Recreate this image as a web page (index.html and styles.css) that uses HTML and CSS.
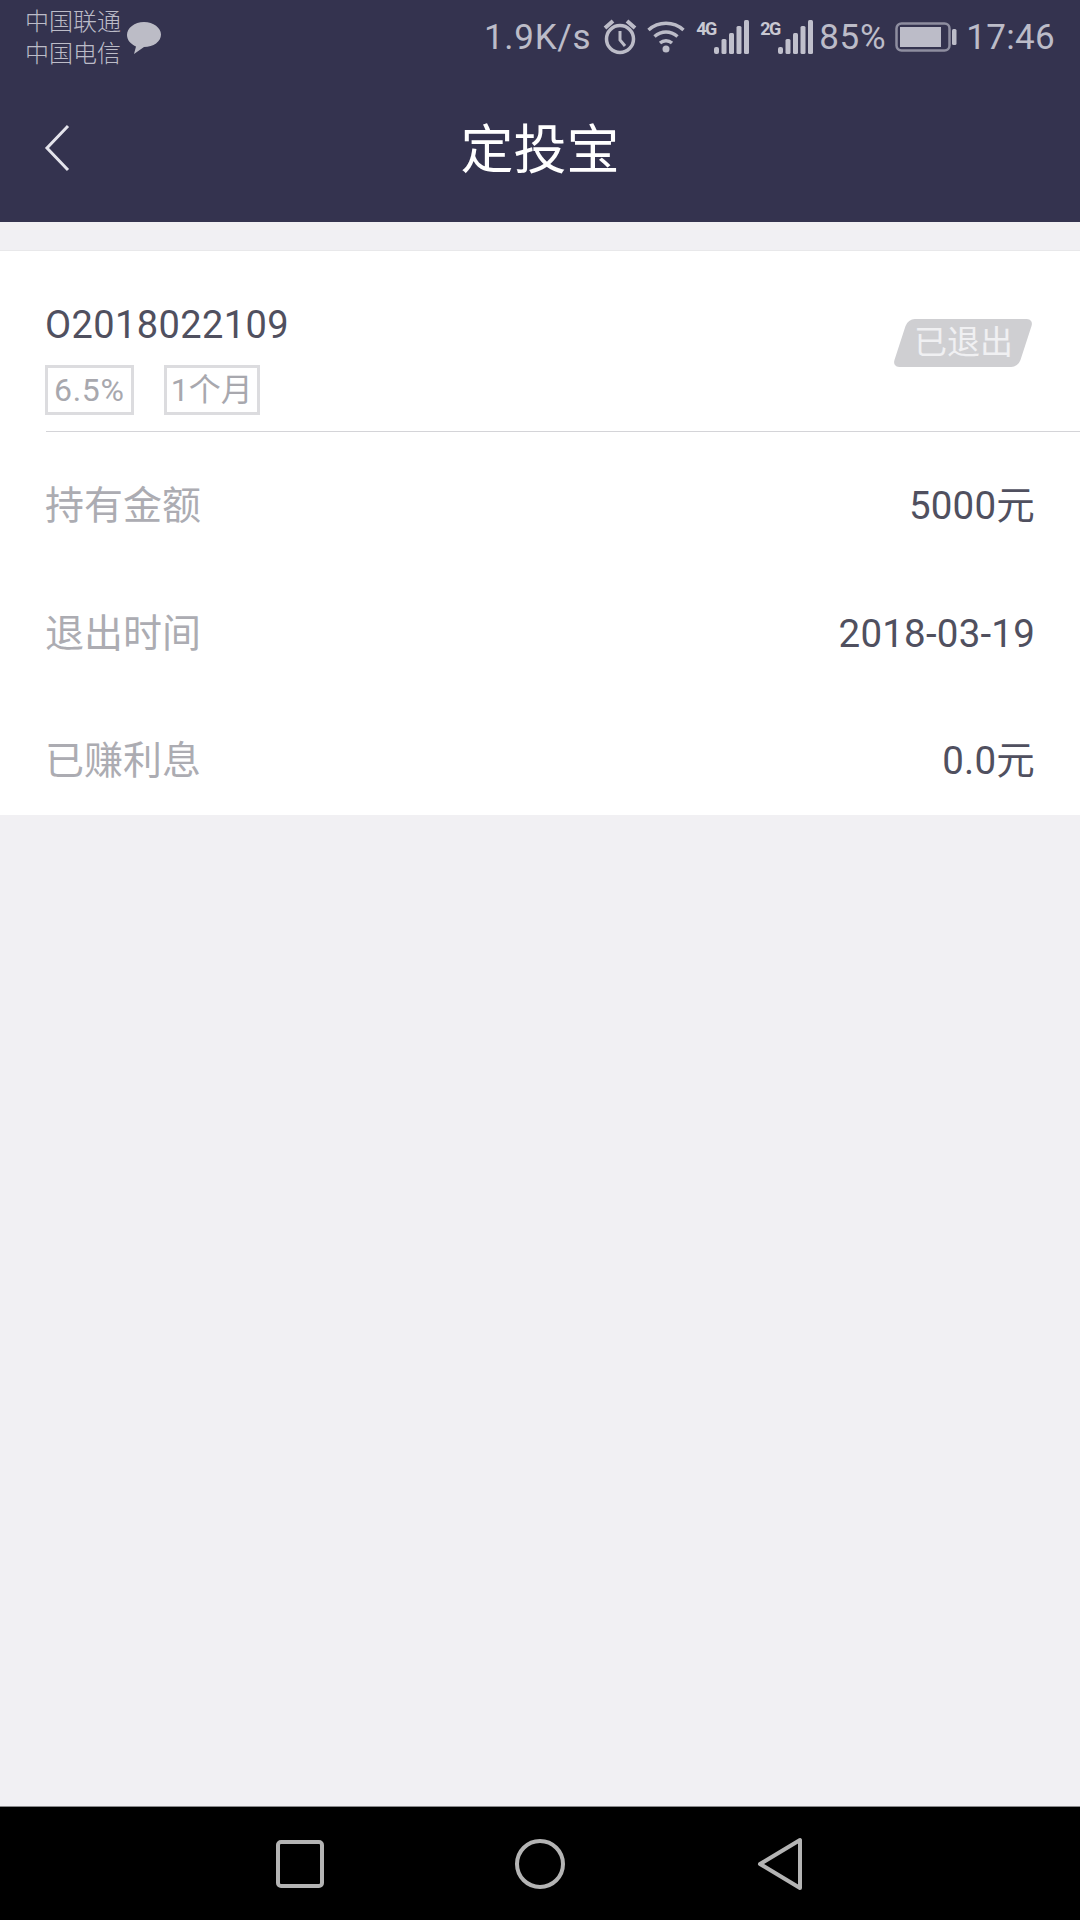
FILE: index.html
```html
<!DOCTYPE html>
<html lang="zh-CN">
<head>
<meta charset="utf-8">
<title>定投宝</title>
<link rel="stylesheet" href="styles.css">
</head>
<body>
<div class="screen">
  <header class="header">
    <div class="status">
      <div class="status-left">
        <div class="carriers"><span>中国联通</span><span>中国电信</span></div>
        <svg class="chat" width="36" height="34" viewBox="0 0 36 34"><path d="M18 1C8.500 1 1 7 1 14c0 5 3.500 9 9 11.500L8 33l10-7c9.500 0 17-5.500 17-12.500C35 7 27.500 1 18 1z" fill="#bcbcc6"/></svg>
      </div>
      <div class="status-right">
        <span class="speed">1.9K/s</span>
        <svg class="ic-alarm" width="36" height="38" viewBox="0 0 36 38" fill="none" stroke="#bcbcc8" stroke-width="3.500"><circle cx="18" cy="21" r="13.500"/><path d="M18 13v9l5 6" stroke-width="3"/><path d="M3 10l8-7M33 10l-8-7" stroke-width="4"/></svg>
        <svg class="ic-wifi" width="38" height="32" viewBox="0 0 38 32" fill="none" stroke="#bcbcc8" stroke-width="3.500"><path d="M1.500 9c10-9 25-9 35 0M7.500 15.500c7-6 16-6 23 0M13 22c3.500-3 8.500-3 12 0"/><circle cx="19" cy="28" r="3.500" fill="#bcbcc8" stroke="none"/></svg>
        <span class="net"><b class="net-label">4G</b><svg width="35" height="34" viewBox="0 0 35 34" fill="#c0c0cc"><rect x="0" y="27" width="5" height="7" rx="2"/><rect x="7.500" y="19" width="5" height="15" rx="1.500"/><rect x="15" y="13" width="5" height="21" rx="1.500"/><rect x="22.500" y="6" width="5" height="28" rx="1.500"/><rect x="30" y="0" width="5" height="34" rx="1.500"/></svg></span>
        <span class="net"><b class="net-label">2G</b><svg width="35" height="34" viewBox="0 0 35 34" fill="#c0c0cc"><rect x="0" y="27" width="5" height="7" rx="2"/><rect x="7.500" y="19" width="5" height="15" rx="1.500"/><rect x="15" y="13" width="5" height="21" rx="1.500"/><rect x="22.500" y="6" width="5" height="28" rx="1.500"/><rect x="30" y="0" width="5" height="34" rx="1.500"/></svg></span>
        <span class="pct">85%</span>
        <svg class="ic-batt" width="62" height="30" viewBox="0 0 62 30"><rect x="1.500" y="1.500" width="53" height="27" rx="5" fill="none" stroke="#8e8ea0" stroke-width="2.500"/><rect x="5" y="5" width="41" height="20" fill="#bcbcc8"/><rect x="57" y="7" width="4.500" height="16" rx="1.500" fill="#bcbcc8"/></svg>
        <span class="time">17:46</span>
      </div>
    </div>
    <div class="navbar">
      <svg class="back" width="26" height="48" viewBox="0 0 26 48" fill="none" stroke="#e4e4ec" stroke-width="3"><path d="M24 2L3 24l21 22"/></svg>
      <h1 class="title">定投宝</h1>
      <span class="nav-spacer"></span>
    </div>
  </header>
  <main class="content">
    <section class="card">
      <div class="summary">
        <div class="summary-main">
          <div class="order">O2018022109</div>
          <div class="tags"><span class="tag">6.5%</span><span class="tag">1个月</span></div>
        </div>
        <div class="badge"><span class="badge-text">已退出</span></div>
      </div>
      <div class="rows">
        <div class="row"><span class="label">持有金额</span><span class="value">5000元</span></div>
        <div class="row"><span class="label">退出时间</span><span class="value">2018-03-19</span></div>
        <div class="row"><span class="label">已赚利息</span><span class="value">0.0元</span></div>
      </div>
    </section>
  </main>
  <footer class="softkeys">
    <svg width="60" height="60" viewBox="0 0 60 60" fill="none" stroke="#b4b4b4" stroke-width="4"><rect x="8" y="8" width="44" height="44" rx="3"/></svg>
    <svg width="60" height="60" viewBox="0 0 60 60" fill="none" stroke="#b4b4b4" stroke-width="4"><circle cx="30" cy="30" r="23"/></svg>
    <svg width="60" height="60" viewBox="0 0 60 60" fill="none" stroke="#b4b4b4" stroke-width="4" stroke-linejoin="round"><path d="M50 6v48L10 30z"/></svg>
  </footer>
</div>
</body>
</html>
```

FILE: styles.css
```css
* { box-sizing: border-box; }
html, body { margin: 0; padding: 0; }
body {
  width: 1080px;
  height: 1920px;
  overflow: hidden;
  font-family: Roboto, "Noto Sans CJK SC", sans-serif;
  background: #f1f0f3;
}
.screen { display: flex; flex-direction: column; height: 1920px; }

.header { height: 222px; background: #34334f; flex: none; }
.status {
  height: 74px;
  display: flex;
  justify-content: space-between;
  align-items: center;
  padding: 0 25px;
}
.status-left { display: flex; align-items: center; gap: 5px; padding-top: 2px; }
.carriers {
  display: flex;
  flex-direction: column;
  font-size: 24px;
  line-height: 32px;
  color: #bcbcc8;
  font-weight: 300;
  width: 96px;
}
.status-right { display: flex; align-items: center; color: #bcbcc8; font-size: 35px; }
.speed { margin-right: 11px; letter-spacing: 0.7px; }
.ic-alarm { margin-right: 9px; }
.ic-wifi { margin-right: 11px; }
.net { display: flex; align-items: flex-start; margin-right: 11px; }
.net-label {
  font-size: 18px;
  line-height: 16px;
  font-weight: 700;
  width: 18px;
  margin-top: 1px;
  letter-spacing: -1.500px;
  color: #c8c8d2;
}
.pct { margin-right: 9px; margin-left: -5px; letter-spacing: 0.7px; }
.ic-batt { margin-right: 9px; }
.time { letter-spacing: 0.3px; }

.navbar {
  height: 148px;
  display: grid;
  grid-template-columns: 1fr auto 1fr;
  align-items: center;
  padding: 0 44px;
}
.title { margin: 6px 0 0; font-size: 53px; font-weight: 400; color: #fff; line-height: 1; }

.content { flex: 1; padding-top: 28px; }
.card { background: #fff; border-top: 1px solid #e8e8ea; }
.summary {
  height: 181px;
  margin-left: 46px;
  padding: 49px 46px 0 0;
  border-bottom: 1.500px solid #d4d4d8;
  display: flex;
  justify-content: space-between;
  align-items: flex-start;
}
.order { font-size: 38px; line-height: 50px; color: #50505f; letter-spacing: 0.4px; margin-left: -1px; }
.tags { display: flex; gap: 30px; margin-top: 15px; margin-left: -1px; }
.tag {
  height: 50px;
  padding: 0 4px;
  border: 3px solid #dcdcdf;
  font-size: 32px;
  line-height: 44px;
  color: #a8a8ae;
}
.tag:first-child { padding: 0 6px; letter-spacing: 0.7px; }
.badge {
  margin-top: 19px;
  width: 126px;
  height: 48px;
  margin-right: 8px;
  background: #cfcfd2;
  border-radius: 7px;
  transform: skewX(-18deg);
  display: flex;
  align-items: center;
  justify-content: center;
}
.badge-text { transform: skewX(18deg); font-size: 33px; line-height: 48px; color: #f0f0f2; white-space: nowrap; }

.rows { display: flex; flex-direction: column; padding-top: 10.500px; }
.row {
  height: 127.500px;
  padding: 0 45px;
  display: flex;
  justify-content: space-between;
  align-items: center;
  font-size: 38.500px;
}
.row:last-child { height: 117.500px; align-items: flex-start; padding-top: 38.500px; }
.label { color: #acacb2; line-height: 50px; font-size: 39px; }
.value { color: #50505f; line-height: 50px; letter-spacing: 0.2px; }

.softkeys {
  height: 114px;
  flex: none;
  background: #000;
  border-top: 1px solid #8a8a8c;
  display: flex;
  justify-content: center;
  align-items: center;
  gap: 180px;
  padding-top: 1px;
}
```
